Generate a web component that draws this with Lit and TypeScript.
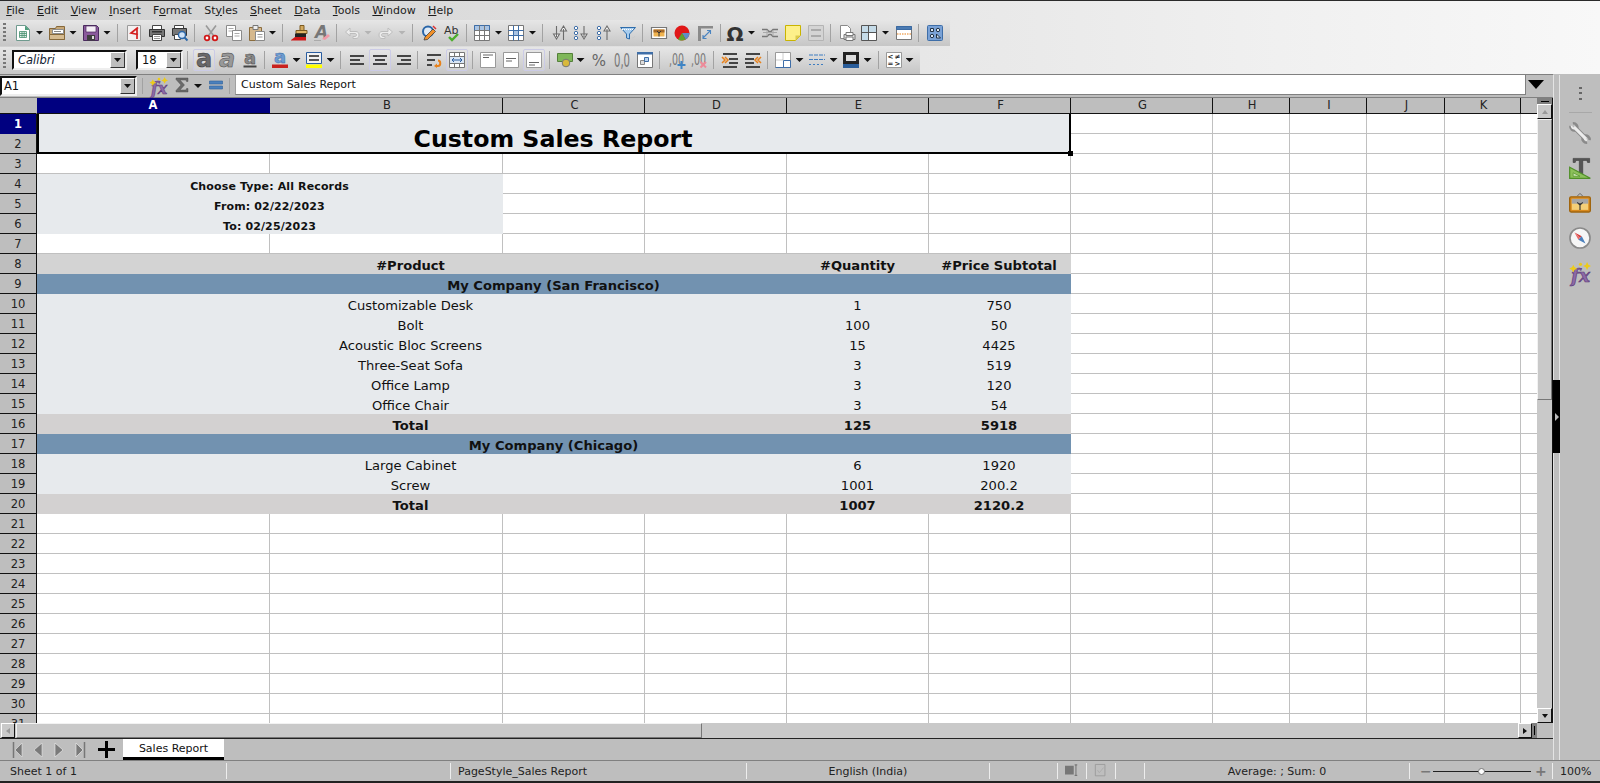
import { LitElement, html, css, svg, nothing } from "lit";
import { customElement } from "lit/decorators.js";

const G = "#6b6b6b";
const ICONS: Record<string, any> = {
  new: svg`<path d="M1.500 .5h9l4 4v11h-13z" fill="#fff" stroke="#6f9a8e"/><path d="M10 .5l4.500 4.500H10z" fill="#4f9d7b"/><path d="M4.500 6.500h7v6h-7zM4.500 8.500h7M4.500 10.500h7M7 6.500v6M9.200 6.500v6" fill="#e4f1ea" stroke="#45906e" stroke-width=".8"/>`,
  open: svg`<path d="M.5 3.500h6l1-2h8v13H.5z" fill="#c7a878" stroke="#86683a"/><path d="M3.500 4.500h11v4h-11z" fill="#fff" stroke="#8d8d8d"/><path d="M5 6.500h7" stroke="#888"/><path d="M.5 9.500h15v5H.5z" fill="#d6bb90" stroke="#86683a"/>`,
  save: svg`<path d="M.5.5h13l2 2v13H.5z" fill="#8a5a9c" stroke="#4a2a5e"/><path d="M3 1h10v6H3z" fill="#f4eef6" stroke="#4a2a5e" stroke-width=".7"/><path d="M4 10h8v5.500H4z" fill="#3f3f3f"/><path d="M9 11h2v3H9z" fill="#ddd"/>`,
  pdf: svg`<path d="M1.500 .5h13v15h-13z" fill="#f3f0f0" stroke="#9a9a9a"/><path d="M12 2.500L5 8l7 1.500M11 3v11" fill="none" stroke="#d42020" stroke-width="1.700"/>`,
  print: svg`<path d="M3.500 .5h9v5h-9z" fill="#fff" stroke="#444"/><path d="M.5 4.500h15v7H.5z" fill="#777" stroke="#333"/><path d="M3 6h10v1.500H3z" fill="#333"/><path d="M3.500 9.500h9v6h-9z" fill="#fff" stroke="#444"/><path d="M5 11.500h6M5 13.500h6" stroke="#999"/>`,
  preview: svg`<path d="M2.500 .5h9v4h-9z" fill="#fff" stroke="#444"/><path d="M.5 3.500h14v7H.5z" fill="#777" stroke="#333"/><path d="M2.500 9.500h6v5h-6z" fill="#fff" stroke="#444"/><circle cx="10" cy="10" r="3.500" fill="#cfe2f6" stroke="#2a66a8" stroke-width="1.400"/><path d="M12.500 12.500l3 3" stroke="#2a66a8" stroke-width="2"/>`,
  cut: svg`<path d="M3 .5l7.500 10M13 .5L5.500 10.500" stroke="#999" stroke-width="1.600"/><circle cx="4" cy="13" r="2.300" fill="#fff" stroke="#d01818" stroke-width="1.800"/><circle cx="12" cy="13" r="2.300" fill="#fff" stroke="#d01818" stroke-width="1.800"/>`,
  copy: svg`<path d="M.5.5h9v11h-9z" fill="#fff" stroke="#8a8a8a"/><path d="M2.500 3.500h5M2.500 6h5" stroke="#aaa"/><path d="M6.500 5.500h9v10h-9z" fill="#fff" stroke="#8a8a8a"/><path d="M8.500 8.500h5M8.500 11h5" stroke="#aaa"/>`,
  paste: svg`<path d="M.5 2.500h12v13H.5z" fill="#d5b88d" stroke="#8b6d3e"/><path d="M4 .5h5v4H4z" fill="#eee" stroke="#777"/><path d="M6.500 6.500h9v9h-9z" fill="#fff" stroke="#8a8a8a"/><path d="M8.500 9.500h5M8.500 12h5" stroke="#999"/>`,
  brush: svg`<path d="M9 .5h4v5H9z" fill="#d2a95f" stroke="#7c5a20"/><path d="M5 5.500h11v3H5z" fill="#e0b466" stroke="#7c5a20"/><path d="M4 8.500h11v5H4z" fill="#222"/><path d="M0 15l4-3h11v3.500H0z" fill="#d01818"/>`,
  clear: svg`<text x="1" y="13" class="g b i" font-size="17" fill="#777">A</text><path d="M8 14l6-5 2 2-5 4z" fill="#ef9aa8"/><path d="M0 15.500h7" stroke="#aaa"/>`,
  undo: svg`<path d="M6 3L1.500 7 6 11V8.500h5c2 0 2 3 0 3H9v2h3c4 0 4-7 0-7H6z" fill="#ececec" stroke="#bdbdbd"/>`,
  redo: svg`<path d="M10 3l4.500 4L10 11V8.500H5c-2 0-2 3 0 3h2v2H4C0 13.500 0 6.500 4 6.500h6z" fill="#ececec" stroke="#bdbdbd"/>`,
  find: svg`<circle cx="7" cy="6.500" r="5" fill="#dfeaf6" stroke="#2a66a8" stroke-width="2"/><path d="M3 15l1-3 8-8 2.500 2.500-8 8z" fill="#f0902a" stroke="#333" stroke-width=".7"/><path d="M12 1l3 3" stroke="#d33" stroke-width="1.500"/>`,
  spell: svg`<text x="0" y="9" class="g" font-size="11" fill="#333">Ab</text><path d="M5 12l3 3 6-6" fill="none" stroke="#4cae2c" stroke-width="2.400"/>`,
  table: svg`<path d="M.5.5h15v15H.5z" fill="#fff" stroke="#777"/><path d="M.5.5h15v5H.5z" fill="#a9c4e4" stroke="#3e6ea8"/><path d="M.5 5.500h15M.5 10.500h15M5.500.5v15M10.500.5v15" stroke="#777"/>`,
  grid: svg`<path d="M.5.5h15v15H.5z" fill="#fff" stroke="#777"/><path d="M5.500 5.500h5v5h-5z" fill="#a9c4e4"/><path d="M.5 5.500h15M.5 10.500h15M5.500.5v15M10.500.5v15" stroke="#3e6ea8"/>`,
  sort: svg`<path d="M4.500 1v11M1.500 9l3 5 3-5zM11.500 15V4M8.500 6l3-5 3 5z" fill="#fff" stroke="${G}" stroke-width="1.100"/>`,
  asc: svg`<circle cx="3" cy="3" r="1.700" fill="#fff" stroke="#3e6ea8"/><circle cx="3" cy="8" r="1.700" fill="#fff" stroke="#3e6ea8"/><circle cx="3" cy="13" r="1.700" fill="#fff" stroke="#3e6ea8"/><path d="M11 1v11M8 9l3 5 3-5z" fill="#fff" stroke="${G}" stroke-width="1.100"/>`,
  desc: svg`<circle cx="3" cy="3" r="1.700" fill="#fff" stroke="#3e6ea8"/><circle cx="3" cy="8" r="1.700" fill="#fff" stroke="#3e6ea8"/><circle cx="3" cy="13" r="1.700" fill="#fff" stroke="#3e6ea8"/><path d="M11 15V4M8 6l3-5 3 5z" fill="#fff" stroke="${G}" stroke-width="1.100"/>`,
  filter: svg`<path d="M.5 2.500h15L9.500 9v5l-3-1V9z" fill="#a8cdee" stroke="#2d6cab"/><path d="M2 4.500h12" stroke="#fff" stroke-dasharray="1 1"/><path d="M12 13a3 3 0 0 0 3-2" stroke="#ccc" fill="none"/>`,
  image: svg`<path d="M.5 2.500h15v11H.5z" fill="#fff" stroke="#777" stroke-width="1.200"/><path d="M2.500 4.500h11v7h-11z" fill="#f0b450"/><path d="M2.500 4.500h11v3h-11z" fill="#a5692a"/><path d="M8 11.500V7M8 8l-2-2M8 8l2-2" stroke="#333"/>`,
  chart: svg`<circle cx="8" cy="8" r="7.500" fill="#e01818"/><path d="M8 8h7.500a7.500 7.500 0 0 1-3.800 6.500z" fill="#5f8ec4"/><path d="M8 8l3.700 6.500A7.500 7.500 0 0 1 4 14.400z" fill="#5fa32e"/>`,
  pivot: svg`<path d="M1 1h15v2.500H4V16H1z" fill="#8a8a8a"/><path d="M6 13l7-7M10 5.500h3.500V9M6 10v3.500h3.500" fill="none" stroke="#4a84c0" stroke-width="1.100"/>`,
  omega: svg`<text x="8" y="15.500" text-anchor="middle" class="g b" font-size="20" fill="#333">Ω</text>`,
  link: svg`<path d="M0 4.500h5l2 2h2l2-2h5M0 11.500h5l2-2h2l2 2h5" fill="none" stroke="#777" stroke-width="1.300"/><path d="M5 5v6M11 5v6M1 7.500h14" stroke="#aaa"/>`,
  note: svg`<path d="M.5.5h15v10l-5 5H.5z" fill="#fdf08a" stroke="#c9b400"/><path d="M15.500 10.500h-5v5z" fill="#dcc94e"/>`,
  hdr: svg`<path d="M.5.5h15v15H.5z" fill="#d4d4d4" stroke="#b4b4b4"/><path d="M3 4h10v2H3zM3 10h10v2H3z" fill="#aaa"/>`,
  area: svg`<path d="M1.500 .5h7l3 3v10h-10z" fill="#fff" stroke="#8a8a8a"/><path d="M5 9.500h11v5H5z" fill="#ddd" stroke="#777"/><path d="M7 7.500h7v3H7z" fill="#fff" stroke="#777"/><path d="M7 12h7v3.500H7z" fill="#fff" stroke="#777"/>`,
  freeze: svg`<path d="M.5.5h15v15H.5z" fill="#fff" stroke="#555"/><path d="M1 1h6.500v6.500H1zM1 8h6.500v7H1zM8 1h7v6.500H8z" fill="#c5dbe8"/><path d="M.5 7.500h15M7.500.5v15" stroke="#555"/>`,
  split: svg`<path d="M.5 1.500h15v13H.5z" fill="#fff" stroke="#777"/><path d="M.5 1.500h15v3H.5z" fill="#4a7ab2" stroke="#3a6aa2"/><path d="M1 9h14" stroke="#e8811a" stroke-dasharray="1.500 1"/>`,
  design: svg`<rect x=".5" y=".5" width="15" height="15" rx="1" fill="#7aa2d6" stroke="#3e6ea8"/><path d="M3.500 3.500h3v3h-3z" fill="#dbe7f5" stroke="#234"/><circle cx="11" cy="5" r="1.700" fill="#dbe7f5" stroke="#234"/><circle cx="5" cy="11" r="1.700" fill="#dbe7f5" stroke="#234"/><path d="M9.500 9v4h4z" fill="#dbe7f5" stroke="#234"/>`,
  bold: svg`<text x="8" y="14.500" text-anchor="middle" class="g b" font-size="24" fill="#6a6a6a" stroke="#333" stroke-width=".5">a</text>`,
  italic: svg`<text x="8" y="14.500" text-anchor="middle" class="g b i" font-size="24" fill="#999" stroke="#444" stroke-width=".5">a</text>`,
  under: svg`<text x="8" y="11.500" text-anchor="middle" class="g b" font-size="18" fill="#888" stroke="#333" stroke-width=".4">a</text><path d="M1.500 14.500h13" stroke="#444" stroke-width="2"/>`,
  fcolor: svg`<text x="8" y="11" text-anchor="middle" class="g b" font-size="18" fill="#6d9bd0" stroke="#2a5da0" stroke-width=".4">a</text><path d="M0 12.500h16V16H0z" fill="#c9211e"/>`,
  bg: svg`<path d="M.5 .5h15v11H.5z" fill="#f2f2f2" stroke="#2a5da0"/><path d="M3 3h10v2H3zM3 7h10v2H3z" fill="#555"/><path d="M0 12.500h16V16H0z" fill="#ffff00"/>`,
  left: svg`<path d="M1 3h14v2H1zM1 7h10v2H1zM1 11h14v2H1z" fill="#444"/>`,
  center: svg`<path d="M1 3h14v2H1zM3 7h10v2H3zM1 11h14v2H1z" fill="#444"/>`,
  right: svg`<path d="M1 3h14v2H1zM5 7h10v2H5zM1 11h14v2H1z" fill="#444"/>`,
  wrap: svg`<path d="M1 2h14v2H1zM1 7h8v2H1zM1 12h5v2H1z" fill="#444"/><path d="M10 14h2c3 0 3-5.500 0-5.500" fill="none" stroke="#e8811a" stroke-width="2"/><path d="M11 11.500l-3 2.500 3 2z" fill="#e8811a"/>`,
  merge: svg`<path d="M.5.5h15v15H.5z" fill="#fff" stroke="#777"/><path d="M.5 4.500h15M.5 11.500h15M5.500.5v4M10.500.5v4M5.500 11.500v4M10.500 11.500v4" stroke="#777"/><path d="M1 5h14v6H1z" fill="#dbe7f5"/><path d="M3 8h10M3 8l2-2M3 8l2 2M13 8l-2-2M13 8l-2 2" fill="none" stroke="#2a5da0"/>`,
  vtop: svg`<path d="M.5.5h15v15H.5z" fill="#fff" stroke="#999"/><path d="M3 3h10M3 5.500h6" stroke="#666"/>`,
  vmid: svg`<path d="M.5.5h15v15H.5z" fill="#fff" stroke="#999"/><path d="M3 6.500h10M3 9h6" stroke="#666"/>`,
  vbot: svg`<path d="M.5.5h15v15H.5z" fill="#fff" stroke="#999"/><path d="M3 10.500h10M3 13h6" stroke="#666"/>`,
  money: svg`<path d="M.5 1.500h15v8H.5z" fill="#7fb75a" stroke="#54803a"/><circle cx="9" cy="11" r="3.800" fill="#d9b93b" stroke="#777"/>`,
  pct: svg`<text x="8" y="13.500" text-anchor="middle" class="g" font-size="15" fill="#666">%</text>`,
  num: svg`<text x="0" y="15" class="g" font-size="19" fill="#777" textLength="16" lengthAdjust="spacingAndGlyphs">0,0</text>`,
  date: svg`<path d="M.5 .5h15v15H.5z" fill="#fff" stroke="#777"/><path d="M0 0h16v2.500H0z" fill="#3e6ea8"/><path d="M3.500 8.500h4v4h-4z" fill="#ddd" stroke="#888"/><path d="M7.500 5.500h4v4h-4z" fill="#bcd3ec" stroke="#3e6ea8"/>`,
  adddec: svg`<text x="0" y="13" class="g" font-size="15" fill="#777" textLength="15" lengthAdjust="spacingAndGlyphs">,00</text><path d="M8.500 13h8M12.500 9v8" stroke="#3e85c6" stroke-width="2"/>`,
  deldec: svg`<text x="0" y="13" class="g" font-size="15" fill="#777" textLength="15" lengthAdjust="spacingAndGlyphs">,00</text><path d="M9.500 10l5.500 5.500M15 10l-5.500 5.500" stroke="#ee8a9a" stroke-width="2"/>`,
  indent: svg`<path d="M1 1h14v2H1zM7 6h9v2H7zM7 10h9v2H7zM1 14h14v2H1z" fill="#444"/><path d="M0 5l3 3-3 3M3 5l3 3-3 3" fill="none" stroke="#e8811a" stroke-width="1.500"/>`,
  outdent: svg`<path d="M1 1h14v2H1zM0 6h9v2H0zM0 10h9v2H0zM1 14h14v2H1z" fill="#444"/><path d="M13 5l-3 3 3 3M16 5l-3 3 3 3" fill="none" stroke="#e8811a" stroke-width="1.500"/>`,
  border: svg`<path d="M.5.5h15v15H.5z" fill="#fff" stroke="#999"/><path d="M8 .5v8M.5 8h7" stroke="#999" stroke-dasharray="1 1"/><path d="M8.500 8.500h7M8.500 8.500v7" stroke="#3e6ea8"/><path d="M.5 15.500h15V8.500" fill="none" stroke="#3e6ea8"/>`,
  line: svg`<path d="M0 3h16M0 7.500h16" stroke="#3e7cc0" stroke-dasharray="4 1"/><path d="M0 12.500h16" stroke="#3e7cc0" stroke-dasharray="2 2"/>`,
  bcolor: svg`<path d="M0 0h16v12H0z" fill="#222"/><path d="M3 3h10v6H3z" fill="#ddd"/><path d="M0 12h16v4H0z" fill="#2a5d9a"/>`,
  cond: svg`<path d="M.5.5h15v15H.5z" fill="#fff" stroke="#999"/><text x="4.500" y="7" text-anchor="middle" class="g b" font-size="7" fill="#222">&lt;</text><text x="11.500" y="7" text-anchor="middle" class="g b" font-size="7" fill="#222">≠</text><text x="4.500" y="14" text-anchor="middle" class="g b" font-size="7" fill="#222">=</text><text x="11.500" y="14" text-anchor="middle" class="g b" font-size="7" fill="#222">&gt;</text>`,
  fx: svg`<text x="8" y="15.500" text-anchor="middle" class="l b i" font-size="14" fill="#8d6aa6" stroke="#5d3a7a" stroke-width=".5">fx</text><path d="M2.500 2l1 2 2 1-2 1-1 2-1-2-2-1 2-1zM13 0l1 2 2 1-2 1-1 2-1-2-2-1 2-1z" fill="#eccb1c"/><circle cx="8" cy="1.800" r="1.200" fill="#eccb1c"/>`,
  sum: svg`<path d="M2 1h12v3.500h-1.500L12 3H6l4.500 5L6 13h6l.5-1.500H14V15H2v-1.500L7 8 2 2.500z" fill="#6a6a6a" stroke="#444" stroke-width=".4"/>`,
  eq: svg`<path d="M1.500 4h13v3h-13zM1.500 9h13v3h-13z" fill="#4b80bc" stroke="#2d5f9a" stroke-width=".6"/>`,
  wrench: svg`<path d="M3.500 3.500L12.500 12.500" stroke="#8a8a8a" stroke-width="3.600"/><path d="M1 2.800a3 3 0 0 0 3.800 3.300M6.100 4.800A3 3 0 0 0 2.800 1M9.900 11.200a3 3 0 0 0 3.300 3.800M11.200 9.900a3 3 0 0 1 3.800 3.300" fill="none" stroke="#8a8a8a" stroke-width="1.800"/><path d="M3.500 3.500L12.500 12.500" stroke="#ececec" stroke-width="2.200"/><path d="M1.800 2.800a2 2 0 0 0 2 2M11.200 11.200a2 2 0 0 0 2 2" fill="none" stroke="#ececec" stroke-width="1.200"/>`,
  typeT: svg`<path d="M3 1h12v3h-1.500L13 2.500h-3V14H7.500V2.500H5L4.500 4H3z" fill="#555" stroke="#333" stroke-width=".4"/><path d="M.5 7.500L15.500 15.500H.5z" fill="#8cc05a" stroke="#4f8f28" stroke-width=".9"/><path d="M3 11.500l5 2.500H3z" fill="#cde5b4" stroke="#4f8f28" stroke-width=".5"/>`,
  gallery: svg`<path d="M6 3l2-2 2 2" fill="none" stroke="#666" stroke-width=".7"/><rect x=".5" y="3.500" width="15" height="11" rx="1" fill="#d98a1e" stroke="#a0650f"/><path d="M2 5h12v8H2z" fill="#f4cf78"/><path d="M2 5h12v3.500H2z" fill="#a5a5a5"/><path d="M8 13V8M8 9.500L6 7.500M8 9.500l2-2" stroke="#333" stroke-width=".8"/>`,
  compass: svg`<circle cx="8" cy="8" r="7.300" fill="#f6f6f6" stroke="#8a8a8a" stroke-width="1.200"/><path d="M4 4l5.300 2.800L8 8z" fill="#d63a3a"/><path d="M4 4l2.800 5.300L8 8z" fill="#e86a6a"/><path d="M12 12L6.800 9.200 8 8zM12 12L9.300 6.800 8 8z" fill="#4b80bc"/>`,
  markI: svg`<path d="M0 2h10v10H0z" fill="#777"/><path d="M11 1h3M11 13h3M12.500 1v12" stroke="#666"/>`,
  doc: svg`<path d="M1.500 .5h11v13h-11z" fill="none" stroke="#999"/><path d="M4 7l2 3 5-6" fill="none" stroke="#aaa"/>`,
};

const W: Record<string, number> = { g: 3, s: 1, a: 8, ad: 8, font: 115, size: 47 };
const ROW1: [string, number][] = [["g",4],["new",23],["a",39.5],["open",57],["a",73],["save",91],["a",107],["s",117],["pdf",133.5],["print",157],["preview",180],["s",194],["cut",211],["copy",234],["paste",256.5],["a",272.5],["s",282],["brush",299],["clear",322],["s",336],["undo",352],["ad",368],["redo",386],["ad",402],["s",412],["find",429],["spell",452],["s",466],["table",482],["a",498.5],["grid",516],["a",532.5],["s",542],["sort",560],["asc",581],["desc",604],["filter",628],["s",642],["image",659],["chart",682],["pivot",705],["s",720],["omega",735],["a",751.5],["link",770],["note",793],["hdr",816],["s",830],["area",847],["freeze",869],["a",885.5],["split",904],["s",918],["design",935]];
const ROW2: [string, number][] = [["g",4],["font",69.5],["size",159.5],["s",187],["bold",204],["italic",227],["under",250],["s",264],["fcolor",280],["a",296.5],["bg",314],["a",330.5],["s",340],["left",357],["center",380],["right",403.5],["s",417],["wrap",434],["merge",457],["s",472],["vtop",488],["vmid",511],["vbot",534],["s",549],["money",565],["a",580.5],["pct",598.5],["num",622],["date",645],["s",659],["adddec",676.5],["deldec",699],["s",713],["indent",730],["outdent",753],["s",767],["border",783],["a",799.5],["line",817],["a",833.5],["bcolor",851],["a",867.5],["s",878],["cond",893.5],["a",909.5]];
const FRAMED = new Set(["bold", "center", "merge", "vbot"]);

const COLS = [37, 233, 233, 142, 142, 142, 142, 142, 77, 77, 78, 76, 17];
const LETTERS = ["A","B","C","D","E","F","G","H","I","J","K",""];
const MENU = [["","F","ile"],["","E","dit"],["","V","iew"],["","I","nsert"],["F","o","rmat"],["St","y","les"],["","S","heet"],["","D","ata"],["","T","ools"],["","W","indow"],["","H","elp"]];

type Row = { kind: string; cells: string[] };
const DATA: Record<number, Row> = {
  8: { kind: "hd", cells: ["#Product", "#Quantity", "#Price Subtotal"] },
  9: { kind: "co", cells: ["My Company (San Francisco)"] },
  10: { kind: "it", cells: ["Customizable Desk", "1", "750"] },
  11: { kind: "it", cells: ["Bolt", "100", "50"] },
  12: { kind: "it", cells: ["Acoustic Bloc Screens", "15", "4425"] },
  13: { kind: "it", cells: ["Three-Seat Sofa", "3", "519"] },
  14: { kind: "it", cells: ["Office Lamp", "3", "120"] },
  15: { kind: "it", cells: ["Office Chair", "3", "54"] },
  16: { kind: "tt", cells: ["Total", "125", "5918"] },
  17: { kind: "co", cells: ["My Company (Chicago)"] },
  18: { kind: "it", cells: ["Large Cabinet", "6", "1920"] },
  19: { kind: "it", cells: ["Screw", "1001", "200.2"] },
  20: { kind: "tt", cells: ["Total", "1007", "2120.2"] },
};
const INFO: Record<number, string> = { 4: "Choose Type: All Records", 5: "From: 02/22/2023", 6: "To: 02/25/2023" };

@customElement("app-root")
export class AppRoot extends LitElement {
  static styles = css`
    :host { display: flex; flex-direction: column; width: 1600px; height: 783px; overflow: hidden; background: #bebebe; font: 11px "DejaVu Sans", sans-serif; color: #111; }
    svg { display: block; overflow: visible; }
    .g { font-family: "DejaVu Sans", sans-serif; }
    .l { font-family: "DejaVu Serif", serif; }
    .b { font-weight: 700; }
    .i { font-style: italic; }
    .top { height: 74px; flex: none; box-sizing: border-box; border-top: 1px solid #2a2a2a; background: linear-gradient(to right, #d0d0d0, #f8f8f8); }
    .menu { display: flex; height: 19px; align-items: center; padding-bottom: 1px; box-sizing: border-box; }
    .menu span { padding: 0 6.2px; color: #1c1c1c; white-space: pre; }
    .bar { display: flex; align-items: center; box-sizing: border-box; background: linear-gradient(#e6e6e6, #c6c6c6); }
    .bar1 { width: 950px; height: 26px; margin-bottom: 1px; padding-bottom: 1px; }
    .bar2 { width: 920px; height: 27px; padding-bottom: 1px; }
    .slot { flex: none; width: 22px; height: 22px; box-sizing: border-box; display: flex; align-items: center; justify-content: center; }
    .slot.on { border: 1px solid #cbcbe6; border-radius: 2px; background: rgba(255,255,255,.12); }
    .s { flex: none; width: 1px; height: 18px; background: #a2a2a2; }
    .arrow { flex: none; width: 8px; height: 4px; background: #111; clip-path: polygon(0 0, 100% 0, 50% 100%); }
    .ad { background: #b4b4b4; }
    .grip { flex: none; width: 3px; height: 20px; background: repeating-linear-gradient(#777 0 2px, transparent 2px 4px); }
    .box { flex: none; height: 20px; box-sizing: border-box; background: #fff; border: 2px solid #111; border-right-color: #eee; border-bottom-color: #eee; display: flex; align-items: center; justify-content: space-between; font-size: 11.5px; padding-left: 4px; overflow: hidden; }
    .font { width: 115px; font-style: italic; color: #123; }
    .size { width: 47px; color: #111; }
    .dd { flex: none; width: 15px; height: 16px; box-sizing: border-box; background: #bebebe; border: 1px solid; border-color: #fff #333 #333 #fff; display: flex; align-items: center; justify-content: center; }
    .dd i { display: block; width: 7px; height: 4px; background: #111; clip-path: polygon(0 0, 100% 0, 50% 100%); }
    .work { flex: 1; display: flex; min-height: 0; }
    .left { width: 1553px; flex: none; display: flex; flex-direction: column; min-height: 0; }
    .fbar { flex: none; height: 24px; box-sizing: border-box; border-top: 1px solid #808080; border-bottom: 1px solid #808080; display: flex; align-items: flex-start; }
    .name { width: 137px; height: 20px; margin-top: 1px; padding-left: 2px; font-size: 11.5px; line-height: 13px; }
    .fsep { flex: none; width: 1px; height: 16px; margin-top: 3px; background: #a2a2a2; }
    .fic { flex: none; margin-top: 2px; }
    .input { flex: none; width: 1291px; height: 20px; box-sizing: border-box; background: #fff; border: 1px solid #808080; border-top: none; border-left-color: #a0a0a0; padding: 0 5px; display: flex; align-items: center; white-space: pre; color: #111; }
    .expand { flex: none; width: 0; height: 0; margin: 5px 0 0 2px; border-left: 8px solid transparent; border-right: 8px solid transparent; border-top: 9px solid #000; }
    .mid { flex: none; height: 625px; display: flex; }
    .sheet { flex: none; width: 1537px; height: 625px; overflow: hidden; background: #fff; position: relative; }
    .grid { display: grid; grid-template-rows: 16px repeat(31, 20px); }
    .cell { box-sizing: border-box; border-right: 1px solid #c0c0c0; border-bottom: 1px solid #c0c0c0; display: flex; align-items: flex-end; justify-content: center; font-size: 13.1px; line-height: 15px; color: #111; white-space: pre; min-width: 0; overflow: hidden; }
    .ch { background: #bebebe; border-right: 1px solid #111; border-bottom: 1px solid #111; align-items: center; font-size: 11.5px; line-height: 15px; color: #222; padding-left: 2px; }
    .ch.sel { background: #000080; color: #fff; font-weight: 700; border-right-color: #000080; padding-left: 0; }
    .ch.corner { border-right-color: #bebebe; }
    .rh { background: #bebebe; border-right: 1px solid #111; border-bottom: 1px solid #111; align-items: center; font-size: 11.5px; color: #222; padding-top: 2px; }
    .rh.sel { background: #000080; color: #fff; font-weight: 700; border-bottom-color: #000080; }
    .title { background: #e7eaed; border: 2px solid #000; border-top-width: 0; font-size: 23.7px; font-weight: 700; line-height: 26px; color: #000; align-items: flex-end; padding-right: 2px; }
    .info { background: #e7eaed; border: none; font-size: 11px; font-weight: 700; letter-spacing: .13px; padding-right: 1px; }
    .hd, .co, .it, .tt { border: none; padding-bottom: 1px; }
    .hd { background: #d3d3d3; font-weight: 700; }
    .co { background: #7292b0; font-weight: 700; padding-right: 1px; }
    .it { background: #e7eaed; }
    .tt { background: #d3d1d1; font-weight: 700; }
    .wide { padding-right: 3px; }
    .midc { padding-right: 1px; }
    .lastc { padding-right: 2px; }
    .handle { position: absolute; left: 1068px; top: 53px; width: 5px; height: 5px; background: #000; }
    .vs { flex: none; width: 16px; height: 625px; box-sizing: border-box; border-right: 1px solid #111; display: flex; flex-direction: column; background: #c9c9c9; }
    .vmini { height: 6px; background: #808080; display: flex; align-items: center; justify-content: center; }
    .vmini i { display: block; width: 8px; height: 1px; background: #000; }
    .btn { flex: none; box-sizing: border-box; background: #c9c9c9; border: 1px solid; border-color: #fff #111 #111 #fff; display: flex; align-items: center; justify-content: center; }
    .vb { height: 15px; }
    .thumb { flex: none; box-sizing: border-box; background: #c9c9c9; border: 1px solid; border-color: #f2f2f2 #777 #777 #f2f2f2; }
    .vthumb { height: 281px; }
    .spacer { flex: 1; }
    .tri { width: 0; height: 0; border: 3.500px solid transparent; }
    .tri.up { border-top: none; border-bottom: 4px solid #999; }
    .tri.dn { border-bottom: none; border-top: 4px solid #111; }
    .tri.lf { border-left: none; border-right: 4px solid #999; }
    .tri.rt { border-right: none; border-left: 4px solid #111; }
    .hs { flex: none; height: 15px; display: flex; background: #c9c9c9; width: 1537px; }
    .hb { width: 14px; }
    .hthumb { width: 686px; margin-left: 1px; }
    .hgrip { flex: none; width: 5px; background: #808080; display: flex; justify-content: center; }
    .hgrip i { display: block; width: 1px; height: 9px; margin-top: 3px; background: #000; }
    .tabs { flex: 1; box-sizing: border-box; border-top: 1px solid #222; display: flex; align-items: flex-start; background: #bebebe; }
    .nav { flex: none; width: 11px; height: 16px; margin-top: 3px; }
    .plus { flex: none; margin: 2px 0 0 12px; }
    .tab { flex: none; width: 101px; height: 21px; margin-left: 8px; box-sizing: border-box; background: #fff; border-bottom: 3px solid #000; display: flex; align-items: center; justify-content: center; color: #111; }
    .side { flex: 1; display: flex; border-left: 1px solid #e4e4e4; margin-top: 1px; }
    .gut { flex: none; width: 5px; border-right: 1px solid #e4e4e4; position: relative; }
    .handlebar { position: absolute; left: -1px; top: 305px; width: 7px; height: 73px; background: #000; display: flex; align-items: center; justify-content: center; }
    .handlebar i { display: block; width: 0; height: 0; border-left: 4px solid #bbb; border-top: 4px solid transparent; border-bottom: 4px solid transparent; }
    .panel { flex: 1; display: flex; flex-direction: column; align-items: center; padding-top: 12px; }
    .dots { width: 3px; height: 13px; background: repeating-linear-gradient(#666 0 2px, transparent 2px 5.500px); }
    .psep { width: 23px; height: 1px; background: #a8a8a8; margin: 12px 0 9px; }
    .pic { margin-bottom: 13px; }
    .status { flex: none; height: 23px; box-sizing: border-box; border-top: 1px solid #808080; border-bottom: 2px solid #222; display: flex; align-items: center; background: #bebebe; }
    .st { flex: none; height: 16px; box-sizing: border-box; border-right: 1px solid #ededed; display: flex; align-items: center; white-space: pre; color: #222; }
    .c { justify-content: center; }
    .zm { padding-left: 10px; }
    .zbtn { flex: none; width: 10px; text-align: center; color: #777; font-size: 14px; font-weight: 700; line-height: 14px; }
    .track { flex: none; width: 98px; height: 1px; margin: 0 4px 0 3px; background: #222; position: relative; }
    .knob { position: absolute; left: 45px; top: -3px; width: 7px; height: 7px; box-sizing: border-box; border-radius: 50%; background: #fff; border: 1px solid #777; }
  `;

  private icon(name: string, size = 16) {
    return html`<svg width=${size} height=${size} viewBox="0 0 16 16">${ICONS[name]}</svg>`;
  }

  private item(key: string) {
    if (key === "g") return html`<div class="grip"></div>`;
    if (key === "s") return html`<div class="s"></div>`;
    if (key === "a") return html`<div class="arrow"></div>`;
    if (key === "ad") return html`<div class="arrow ad"></div>`;
    if (key === "font") return html`<div class="box font">Calibri<div class="dd"><i></i></div></div>`;
    if (key === "size") return html`<div class="box size">18<div class="dd"><i></i></div></div>`;
    return html`<div class="slot ${FRAMED.has(key) ? "on" : ""}">${this.icon(key)}</div>`;
  }

  private toolbar(items: [string, number][], cls: string) {
    let end = 0;
    return html`<div class="bar ${cls}">${items.map(([k, c]) => {
      const w = W[k] ?? 22;
      const ml = c - w / 2 - end;
      end = c + w / 2;
      return html`<div style="margin-left:${ml}px;flex:none">${this.item(k)}</div>`;
    })}</div>`;
  }

  private cell(c: number, span: number, r: number, cls: string, text: unknown = nothing, rspan = 1) {
    return html`<div class="cell ${cls}" style="grid-column:${c + 1}/span ${span};grid-row:${r + 1}/span ${rspan}">${text}</div>`;
  }

  private sheetCells() {
    const out: unknown[] = [this.cell(0, 1, 0, "ch corner")];
    LETTERS.forEach((l, i) => out.push(this.cell(i + 1, 1, 0, `ch ${i === 0 ? "sel" : ""}`, l)));
    for (let r = 1; r <= 31; r++) {
      out.push(this.cell(0, 1, r, `rh ${r === 1 ? "sel" : ""}`, String(r)));
      if (r === 1) out.push(this.cell(1, 6, 1, "title", "Custom Sales Report", 2));
      let start = 1;
      if (r <= 2) start = 7;
      else if (INFO[r]) { out.push(this.cell(1, 2, r, "info", INFO[r])); start = 3; }
      else if (DATA[r]) {
        const d = DATA[r];
        if (d.kind === "co") out.push(this.cell(1, 6, r, "co", d.cells[0]));
        else {
          out.push(this.cell(1, 4, r, `${d.kind} wide`, d.cells[0]));
          out.push(this.cell(5, 1, r, `${d.kind} midc`, d.cells[1]));
          out.push(this.cell(6, 1, r, `${d.kind} lastc`, d.cells[2]));
        }
        start = 7;
      }
      for (let c = start; c < COLS.length; c++) out.push(this.cell(c, 1, r, ""));
    }
    return out;
  }

  render() {
    const cols = COLS.map((w) => `${w}px`).join(" ");
    const st = (w: number) => `width:${w}px`;
    return html`
      <div class="top">
        <div class="menu">${MENU.map(([a, b, c]) => html`<span>${a}<u>${b}</u>${c}</span>`)}</div>
        ${this.toolbar(ROW1, "bar1")}
        ${this.toolbar(ROW2, "bar2")}
      </div>
      <div class="work">
        <div class="left">
          <div class="fbar">
            <div class="box name">A1<div class="dd"><i></i></div></div>
            <div class="fsep" style="margin-left:5px"></div>
            <div class="fic" style="margin-left:7px">${this.icon("fx", 18)}</div>
            <div class="fic" style="margin-left:6px">${this.icon("sum")}</div>
            <div class="arrow" style="margin:9px 0 0 4px"></div>
            <div class="fic" style="margin:2px 0 0 6px">${this.icon("eq")}</div>
            <div class="fsep" style="margin-left:5px"></div>
            <div class="input" style="margin-left:5px">Custom Sales Report</div>
            <div class="expand"></div>
          </div>
          <div class="mid">
            <div class="sheet">
              <div class="grid" style="grid-template-columns:${cols}">${this.sheetCells()}</div>
              <div class="handle"></div>
            </div>
            <div class="vs">
              <div class="vmini"><i></i></div>
              <div class="btn vb"><div class="tri up"></div></div>
              <div class="thumb vthumb"></div>
              <div class="spacer"></div>
              <div class="btn vb"><div class="tri dn"></div></div>
            </div>
          </div>
          <div class="hs">
            <div class="btn hb" style="margin-left:1px"><div class="tri lf"></div></div>
            <div class="thumb hthumb"></div>
            <div class="spacer"></div>
            <div class="btn hb"><div class="tri rt"></div></div>
            <div class="hgrip"><i></i></div>
          </div>
          <div class="tabs">
            <svg class="nav" style="margin-left:12px" viewBox="0 0 11 16"><path d="M1.500 0v16" stroke="#777" stroke-width="1.500"/><path d="M10 1v14L3 8z" fill="#7a7a7a" stroke="#e8e8e8" stroke-width=".6"/></svg>
            <svg class="nav" style="margin-left:10px" viewBox="0 0 11 16"><path d="M9 1v14L1 8z" fill="#7a7a7a" stroke="#e8e8e8" stroke-width=".6"/></svg>
            <svg class="nav" style="margin-left:10px" viewBox="0 0 11 16"><path d="M1 1v14l8-7z" fill="#7a7a7a" stroke="#f4f4f4" stroke-width=".6"/></svg>
            <svg class="nav" style="margin-left:10px" viewBox="0 0 11 16"><path d="M1 1v14l7-7z" fill="#7a7a7a" stroke="#f4f4f4" stroke-width=".6"/><path d="M9.500 0v16" stroke="#777" stroke-width="1.500"/></svg>
            <svg class="plus" width="17" height="17" viewBox="0 0 17 17"><path d="M7 0h3v7h7v3h-7v7H7v-7H0V7h7z" fill="#000"/></svg>
            <div class="tab">Sales Report</div>
          </div>
        </div>
        <div class="side">
          <div class="gut"><div class="handlebar"><i></i></div></div>
          <div class="panel">
            <div class="dots"></div>
            <div class="psep"></div>
            <div class="pic">${this.icon("wrench", 22)}</div>
            <div class="pic">${this.icon("typeT", 22)}</div>
            <div class="pic">${this.icon("gallery", 22)}</div>
            <div class="pic">${this.icon("compass", 22)}</div>
            <div class="pic">${this.icon("fx", 21)}</div>
          </div>
        </div>
      </div>
      <div class="status">
        <div class="st" style="${st(227)};padding-left:10px">Sheet 1 of 1</div>
        <div class="st" style="${st(224)}"></div>
        <div class="st" style="${st(296)};padding-left:7px">PageStyle_Sales Report</div>
        <div class="st c" style="${st(243)}">English (India)</div>
        <div class="st c" style="${st(68)}"></div>
        <div class="st c" style="${st(29)}">${this.icon("markI", 14)}</div>
        <div class="st c" style="${st(29)}">${this.icon("doc", 14)}</div>
        <div class="st" style="${st(29)}"></div>
        <div class="st c" style="${st(265)}">Average: ; Sum: 0</div>
        <div class="st zm" style="${st(143)}">
          <span class="zbtn">−</span>
          <div class="track"><div class="knob"></div></div>
          <span class="zbtn">+</span>
        </div>
        <div class="st" style="padding-left:7px;border:none">100%</div>
      </div>
    `;
  }
}
